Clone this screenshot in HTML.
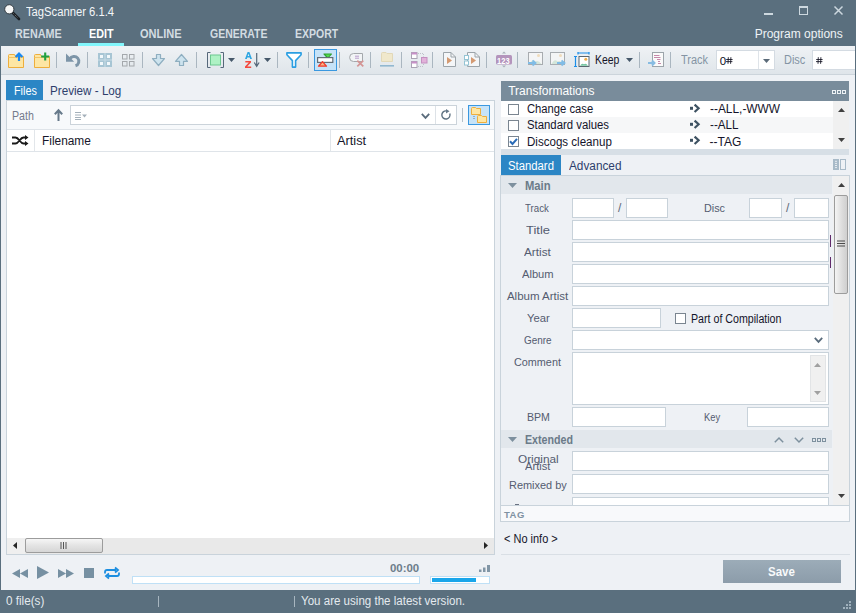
<!DOCTYPE html>
<html><head><meta charset="utf-8">
<style>
*{box-sizing:border-box;margin:0;padding:0}
html,body{width:856px;height:613px;overflow:hidden;background:#eef1f5;font-family:"Liberation Sans",sans-serif;font-size:12px;color:#1a1a2a}
.a{position:absolute}
.t{position:absolute;white-space:nowrap;line-height:1}
svg{overflow:visible}
</style></head><body>
<div class="a" style="left:0px;top:0px;width:856px;height:46px;background:#5a6f7e"></div>
<div class="a" style="left:0px;top:590px;width:856px;height:23px;background:#5a6f7e"></div>
<div class="a" style="left:0px;top:46px;width:1px;height:544px;background:#5a6f7e"></div>
<div class="a" style="left:855px;top:46px;width:1px;height:544px;background:#5a6f7e"></div>
<svg class="a" style="left:0px;top:0px" width="22" height="22" viewBox="0 0 22 22"><path d="M12.5 12.5L19 19" stroke="#1a1e22" stroke-width="2.6" stroke-linecap="round"/><path d="M13.5 13.5L18 18" stroke="#9aa0a4" stroke-width="0.8" stroke-dasharray="1 1.2"/><circle cx="9.3" cy="9.3" r="4.6" fill="#f8f8f8" stroke="#2a3238" stroke-width="0.9"/></svg>
<div class="t" style="left:26.00px;top:5.84px;font-size:12px;font-weight:normal;color:#f4f7f9;letter-spacing:0.000px;transform:scaleX(0.9362);transform-origin:0 0;">TagScanner 6.1.4</div>
<div class="a" style="left:764px;top:13px;width:9px;height:2px;background:#cdd8df"></div>
<div class="a" style="left:799px;top:6px;width:9px;height:9px;border:1px solid #cdd8df;border-top-width:2px"></div>
<svg class="a" style="left:834px;top:6px" width="9" height="9" viewBox="0 0 9 9"><path d="M0.5 0.5L8.5 8.5M8.5 0.5L0.5 8.5" stroke="#cdd8df" stroke-width="1.5"/></svg>
<div class="t" style="left:14.50px;top:28.42px;font-size:12.5px;font-weight:bold;color:#d3dce2;letter-spacing:0.000px;transform:scaleX(0.8636);transform-origin:0 0;">RENAME</div>
<div class="t" style="left:88.50px;top:28.42px;font-size:12.5px;font-weight:bold;color:#ffffff;letter-spacing:0.000px;transform:scaleX(0.8621);transform-origin:0 0;">EDIT</div>
<div class="t" style="left:140.30px;top:28.42px;font-size:12.5px;font-weight:bold;color:#d3dce2;letter-spacing:0.000px;transform:scaleX(0.8833);transform-origin:0 0;">ONLINE</div>
<div class="t" style="left:209.70px;top:28.42px;font-size:12.5px;font-weight:bold;color:#d3dce2;letter-spacing:0.000px;transform:scaleX(0.8377);transform-origin:0 0;">GENERATE</div>
<div class="t" style="left:294.50px;top:28.42px;font-size:12.5px;font-weight:bold;color:#d3dce2;letter-spacing:0.000px;transform:scaleX(0.8404);transform-origin:0 0;">EXPORT</div>
<div class="a" style="left:78px;top:43px;width:46px;height:3px;background:#82f6fc"></div>
<div class="t" style="left:754.70px;top:28.14px;font-size:12px;font-weight:normal;color:#eef3f6;letter-spacing:0.000px;">Program options</div>
<div class="a" style="left:1px;top:46px;width:854px;height:29px;background:linear-gradient(#eff2f5,#dfe5ea);border-bottom:1px solid #ccd4db"></div>
<div class="a" style="left:56px;top:52px;width:1px;height:16px;background:#aab6c0"></div>
<div class="a" style="left:87px;top:52px;width:1px;height:16px;background:#aab6c0"></div>
<div class="a" style="left:142px;top:52px;width:1px;height:16px;background:#aab6c0"></div>
<div class="a" style="left:196px;top:52px;width:1px;height:16px;background:#aab6c0"></div>
<div class="a" style="left:277px;top:52px;width:1px;height:16px;background:#aab6c0"></div>
<div class="a" style="left:308px;top:52px;width:1px;height:16px;background:#aab6c0"></div>
<div class="a" style="left:339px;top:52px;width:1px;height:16px;background:#aab6c0"></div>
<div class="a" style="left:370px;top:52px;width:1px;height:16px;background:#aab6c0"></div>
<div class="a" style="left:401px;top:52px;width:1px;height:16px;background:#aab6c0"></div>
<div class="a" style="left:432px;top:52px;width:1px;height:16px;background:#aab6c0"></div>
<div class="a" style="left:486px;top:52px;width:1px;height:16px;background:#aab6c0"></div>
<div class="a" style="left:517px;top:52px;width:1px;height:16px;background:#aab6c0"></div>
<div class="a" style="left:639px;top:52px;width:1px;height:16px;background:#aab6c0"></div>
<div class="a" style="left:670px;top:52px;width:1px;height:16px;background:#aab6c0"></div>
<svg class="a" style="left:8px;top:54px" width="17" height="14" viewBox="0 0 17 14"><path d="M0.5 3.5V1.5Q0.5 0.5 1.5 0.5H6.5L7.5 2.5H15.5V13.5H0.5Z" fill="#fde6a4" stroke="#eeae3c"/><path d="M0.5 3.5H15.5" stroke="#eeae3c" stroke-opacity="0.6"/></svg>
<svg class="a" style="left:14px;top:52px" width="10" height="9" viewBox="0 0 10 9"><path d="M1.6 5L5 1.6L8.4 5M5 2V9" stroke="#1888f0" stroke-width="2.2" fill="none"/></svg>
<svg class="a" style="left:34px;top:54px" width="17" height="14" viewBox="0 0 17 14"><path d="M0.5 3.5V1.5Q0.5 0.5 1.5 0.5H6.5L7.5 2.5H15.5V13.5H0.5Z" fill="#fde6a4" stroke="#eeae3c"/><path d="M0.5 3.5H15.5" stroke="#eeae3c" stroke-opacity="0.6"/></svg>
<svg class="a" style="left:40px;top:52px" width="10" height="9" viewBox="0 0 10 9"><path d="M5.2 0.5V8.5M1.2 4.5H9.2" stroke="#20a040" stroke-width="2.1"/></svg>
<svg class="a" style="left:62px;top:50px" width="22" height="20" viewBox="0 0 22 20"><path d="M7.8 9A4.8 4.8 0 1 1 13.5 15.8" stroke="#7d95a8" stroke-width="3" fill="none"/><path d="M4 3.5V11.7H12.2Z" fill="#7d95a8"/></svg>
<svg class="a" style="left:98px;top:53px" width="14" height="14" viewBox="0 0 14 14"><rect x="0" y="0" width="14" height="14" fill="#a7c5d4"/><path d="M7 0V14M0 7H14" stroke="#c8dce6" stroke-width="1"/><rect x="2" y="2" width="3" height="3" fill="#f2f8fb"/><rect x="9" y="2" width="3" height="3" fill="#f2f8fb"/><rect x="2" y="9" width="3" height="3" fill="#f2f8fb"/><rect x="9" y="9" width="3" height="3" fill="#f2f8fb"/></svg>
<svg class="a" style="left:122px;top:54px" width="13" height="13" viewBox="0 0 13 13"><rect x="0.5" y="0.5" width="4.5" height="4.5" fill="none" stroke="#a4a8ac"/><rect x="7.5" y="0.5" width="4.5" height="4.5" fill="none" stroke="#a4a8ac"/><rect x="0.5" y="7.5" width="4.5" height="4.5" fill="none" stroke="#a4a8ac"/><rect x="7.5" y="7.5" width="4.5" height="4.5" fill="none" stroke="#a4a8ac"/></svg>
<svg class="a" style="left:152px;top:54px" width="13" height="12" viewBox="0 0 13 12"><path d="M4.5 0.5H8.5V4.5H12.5L6.5 11.5L0.5 4.5H4.5Z" fill="#cde3ee" stroke="#8eaec0" stroke-width="1.2" stroke-linejoin="round"/></svg>
<svg class="a" style="left:175px;top:54px" width="13" height="12" viewBox="0 0 13 12"><path d="M4.5 11.5H8.5V7.3H12.5L6.5 0.5L0.5 7.3H4.5Z" fill="#cde3ee" stroke="#8eaec0" stroke-width="1.2" stroke-linejoin="round"/></svg>
<svg class="a" style="left:207px;top:52px" width="17" height="16" viewBox="0 0 17 16"><path d="M3.5 0.5H0.5V15.5H3.5M13.5 0.5H16.5V15.5H13.5" stroke="#56687a" fill="none"/><rect x="3.5" y="3" width="10" height="10" fill="#aef2c4" stroke="#6cc890"/></svg>
<svg class="a" style="left:228px;top:58px" width="7" height="4" viewBox="0 0 7 4"><path d="M0 0H7L3.5 4Z" fill="#46586a"/></svg>
<svg class="a" style="left:244.5px;top:52px" width="7" height="7" viewBox="0 0 7 7"><path fill-rule="evenodd" d="M0 7L2.6 0H4.4L7 7H5.2L4.7 5.5H2.3L1.8 7ZM2.7 4.1H4.3L3.5 1.7Z" fill="#2ea6e2"/></svg>
<svg class="a" style="left:245px;top:61px" width="6" height="7" viewBox="0 0 6 7"><path d="M0.3 0H6V1.4L2.2 5.6H6.2V7H0V5.6L3.8 1.4H0.3Z" fill="#f44a3e"/></svg>
<svg class="a" style="left:254px;top:53px" width="6" height="14" viewBox="0 0 6 14"><path d="M2.7 0V13.5M0.3 9.5L2.7 13.3L5.1 9.5" stroke="#56687a" stroke-width="1.2" fill="none"/></svg>
<svg class="a" style="left:264px;top:58px" width="7" height="4" viewBox="0 0 7 4"><path d="M0 0H7L3.5 4Z" fill="#46586a"/></svg>
<svg class="a" style="left:286px;top:52px" width="16" height="16" viewBox="0 0 16 16"><path d="M0.9 0.9H15.1V2.8L9.6 8.6V15.1H6.4V8.6L0.9 2.8Z" fill="#fff" stroke="#2a9ee2" stroke-width="1.6" stroke-linejoin="round"/></svg>
<div class="a" style="left:314px;top:49px;width:23px;height:22px;background:#c6e3f8;border:1px solid #3a98e0"></div>
<svg class="a" style="left:317px;top:53px" width="17" height="14" viewBox="0 0 17 14"><path d="M7 1H14.5L10.8 5Z" fill="#52dc4e" stroke="#2ea030" stroke-width="1.1" stroke-linejoin="round"/><rect x="0.6" y="4.6" width="15.2" height="4.8" fill="#fff" stroke="#646e78" stroke-width="1.2"/><path d="M1.5 13.2H9.5L5.5 8.6Z" fill="#f8b484" stroke="#f03c2c" stroke-width="1.3" stroke-linejoin="round"/></svg>
<svg class="a" style="left:349px;top:53px" width="16" height="14" viewBox="0 0 16 14"><path d="M4.5 0.5H13.5V8.5H4.5Q0.6 8.5 0.6 4.5Q0.6 0.5 4.5 0.5Z" fill="#f2f4f6" stroke="#a4a8ac"/><path d="M6 3.2H10M6 5.2H10" stroke="#b89ccc"/><path d="M8.3 7.6L14.3 13.3M14.3 7.6L8.3 13.3" stroke="#d49494" stroke-width="1.7"/></svg>
<svg class="a" style="left:380px;top:52px" width="14" height="15" viewBox="0 0 14 15"><path d="M1.5 1.5Q1.5 0.5 2.5 0.5H6L7 1.5H12.5V9.5H1.5Z" fill="#f0e8cc" stroke="#e2d8b8"/><rect x="0" y="13" width="14" height="1.6" fill="#92b8d0"/></svg>
<svg class="a" style="left:411px;top:52px" width="17" height="16" viewBox="0 0 17 16"><rect x="0.5" y="0.5" width="5.5" height="6" fill="#fff" stroke="#aaa4b4"/><rect x="0.5" y="0.5" width="5.5" height="2" fill="#c890c8"/><rect x="0.5" y="9.5" width="5.5" height="6" fill="#fff" stroke="#aaa4b4"/><rect x="0.5" y="9.5" width="5.5" height="2" fill="#c890c8"/><rect x="10.5" y="5.5" width="5.5" height="5.5" fill="#e2b2da" stroke="#c490c0"/><path d="M7 1.5H13M7 14.5H13M12.5 2V4.5M12.5 12V14" stroke="#b8bcc4" stroke-width="0.9" stroke-dasharray="1 1"/></svg>
<svg class="a" style="left:443px;top:52px" width="13" height="15" viewBox="0 0 13 15"><path d="M0.5 0.5H8L12.5 5V14.5H0.5Z" fill="#f4f6f8" stroke="#9ca4aa"/><path d="M8 0.5V5H12.5" fill="none" stroke="#9ca4aa"/><path d="M4 5L9 8.5L4 12Z" fill="#d49a72"/></svg>
<svg class="a" style="left:467px;top:52px" width="13" height="15" viewBox="0 0 13 15"><path d="M0.5 0.5H8L12.5 5V14.5H0.5Z" fill="#f4f6f8" stroke="#9ca4aa"/><path d="M8 0.5V5H12.5" fill="none" stroke="#9ca4aa"/><path d="M4 5L9 8.5L4 12Z" fill="#d49a72"/></svg>
<svg class="a" style="left:464px;top:55px" width="6" height="11" viewBox="0 0 6 11"><rect x="0.5" y="0.5" width="4" height="4" fill="#fff" stroke="#94c4d4"/><rect x="0.5" y="6" width="4" height="4" fill="#fff" stroke="#94c4d4"/></svg>
<svg class="a" style="left:496px;top:51px" width="16" height="17" viewBox="0 0 16 17"><path d="M6 2.5L8 0.5L10 2.5Z" fill="#a8b0b8"/><path d="M6 14.5L8 16.5L10 14.5Z" fill="#a8b0b8"/><rect x="0" y="4" width="16" height="9.5" rx="1.5" fill="#b494bc"/></svg>
<div class="t" style="left:497.30px;top:55.96px;font-size:9.5px;font-weight:bold;color:#ffffff;letter-spacing:0.000px;transform:scaleX(0.7941);transform-origin:0 0;">123</div>
<svg class="a" style="left:528px;top:52px" width="15" height="13" viewBox="0 0 15 13"><rect x="0.5" y="0.5" width="14" height="12" fill="#f4f5f6" stroke="#a8acb0"/><circle cx="10.5" cy="3.5" r="1.5" fill="#f0dcbc"/><path d="M1.5 12Q4.5 6 7.5 9.5Q10 7.5 13.5 12Z" fill="#d4e6da"/></svg>
<svg class="a" style="left:528px;top:60px" width="9" height="6" viewBox="0 0 9 6"><path d="M0 3H7M4.5 0.5L7.5 3L4.5 5.5" stroke="#80bce6" stroke-width="1.8" fill="none"/></svg>
<svg class="a" style="left:550px;top:52px" width="15" height="13" viewBox="0 0 15 13"><rect x="0.5" y="0.5" width="14" height="12" fill="#f4f5f6" stroke="#a8acb0"/><circle cx="10.5" cy="3.5" r="1.5" fill="#f0dcbc"/><path d="M1.5 12Q4.5 6 7.5 9.5Q10 7.5 13.5 12Z" fill="#d4e6da"/></svg>
<svg class="a" style="left:557px;top:60px" width="9" height="6" viewBox="0 0 9 6"><path d="M0 3H7M4.5 0.5L7.5 3L4.5 5.5" stroke="#80bce6" stroke-width="1.8" fill="none"/></svg>
<svg class="a" style="left:574px;top:52px" width="16" height="16" viewBox="0 0 16 16"><path d="M4 1H15M4 0V2.5M15 0V2.5" stroke="#1c8ee8" stroke-width="1.2"/><path d="M1.5 4.5V14.5M0 4.5H3M0 14.5H3" stroke="#1c8ee8" stroke-width="1.2"/><rect x="5" y="4.5" width="10" height="10" fill="#fff" stroke="#5a6670"/><circle cx="11.8" cy="7.3" r="1.5" fill="#f0b050"/><path d="M6 13.8Q8 10.5 10 12.3Q12 10.8 14 13.8Z" fill="#74c4a0"/></svg>
<div class="t" style="left:594.70px;top:54.44px;font-size:12px;font-weight:normal;color:#141428;letter-spacing:0.000px;transform:scaleX(0.8679);transform-origin:0 0;">Keep</div>
<svg class="a" style="left:626px;top:58px" width="7" height="4" viewBox="0 0 7 4"><path d="M0 0H7L3.5 4Z" fill="#46586a"/></svg>
<svg class="a" style="left:648px;top:52px" width="16" height="15" viewBox="0 0 16 15"><rect x="4.5" y="0.5" width="11" height="14" fill="#fafafa" stroke="#9ca4aa"/><path d="M6 3.5H11.5M6 5.5H12.5M9 7.5H12.5M10 9.5H12M10 11.5H13" stroke="#c07aa0" stroke-width="0.9"/><path d="M0 11H6M4 8.5L6.5 11L4 13.5" stroke="#88bce2" stroke-width="2" fill="none"/></svg>
<div class="t" style="left:680.50px;top:54.04px;font-size:12px;font-weight:normal;color:#8494a4;letter-spacing:0.000px;transform:scaleX(0.9129);transform-origin:0 0;">Track</div>
<div class="a" style="left:716px;top:50px;width:59px;height:20px;background:#fff;border:1px solid #d4dbe2"></div>
<div class="a" style="left:758px;top:51px;width:1px;height:18px;background:#dfe4e9"></div>
<div class="t" style="left:719.70px;top:56.27px;font-size:11.5px;font-weight:normal;color:#101020;letter-spacing:0.000px;">0</div>
<svg class="a" style="left:726px;top:57px" width="7" height="7" viewBox="0 0 7 7"><path d="M2.3 0.2L2 6.8M4.9 0.2L4.6 6.8M0.2 2.5H6.6M0 4.6H6.4" stroke="#101020" stroke-width="0.85"/></svg>
<svg class="a" style="left:763px;top:59px" width="7" height="4" viewBox="0 0 7 4"><path d="M0 0H7L3.5 4Z" fill="#5a6a78"/></svg>
<div class="t" style="left:783.70px;top:54.04px;font-size:12px;font-weight:normal;color:#8494a4;letter-spacing:0.000px;transform:scaleX(0.9130);transform-origin:0 0;">Disc</div>
<div class="a" style="left:812px;top:50px;width:43px;height:20px;background:#fff;border:1px solid #d4dbe2;border-right:none"></div>
<svg class="a" style="left:816px;top:57px" width="7" height="7" viewBox="0 0 7 7"><path d="M2.3 0.2L2 6.8M4.9 0.2L4.6 6.8M0.2 2.5H6.6M0 4.6H6.4" stroke="#101020" stroke-width="0.85"/></svg>
<div class="a" style="left:6px;top:80px;width:37px;height:20px;background:#2b86c5"></div>
<div class="t" style="left:13.50px;top:84.64px;font-size:12px;font-weight:normal;color:#ffffff;letter-spacing:0.000px;transform:scaleX(0.9000);transform-origin:0 0;">Files</div>
<div class="t" style="left:50.20px;top:84.84px;font-size:12px;font-weight:normal;color:#2d3e6c;letter-spacing:0.000px;transform:scaleX(0.9726);transform-origin:0 0;">Preview - Log</div>
<div class="a" style="left:6px;top:100px;width:489px;height:455px;background:#f7f9fb;border:1px solid #c9d3db"></div>
<div class="t" style="left:12.30px;top:109.84px;font-size:12px;font-weight:normal;color:#747a8c;letter-spacing:0.000px;transform:scaleX(0.8880);transform-origin:0 0;">Path</div>
<svg class="a" style="left:54px;top:109px" width="9" height="12" viewBox="0 0 9 12"><path d="M4.5 1.5V12M0.8 5.2L4.5 1.2L8.2 5.2" stroke="#66798a" stroke-width="2" fill="none"/></svg>
<div class="a" style="left:70px;top:105px;width:387px;height:20px;background:#fff;border:1px solid #cbd3da"></div>
<div class="a" style="left:435px;top:106px;width:1px;height:18px;background:#dde2e7"></div>
<svg class="a" style="left:75px;top:112px" width="13" height="8" viewBox="0 0 13 8"><path d="M0 0.5H6M0 3H6M0 5.5H6M0 7.5H6" stroke="#a4b0ba"/><path d="M7 2.5H12L9.5 5.5Z" fill="#a4b0ba"/></svg>
<svg class="a" style="left:421px;top:113px" width="9" height="6" viewBox="0 0 9 6"><path d="M0.8 0.8L4.5 4.8L8.2 0.8" stroke="#5a6c7c" stroke-width="1.8" fill="none"/></svg>
<svg class="a" style="left:441px;top:109px" width="11" height="12" viewBox="0 0 11 12"><path d="M8.8 4.6A4.1 4.1 0 1 1 5.5 1.9" stroke="#5e7282" stroke-width="1.4" fill="none"/><path d="M5 0L8.5 2.2L5 4.5Z" fill="#66798a"/></svg>
<div class="a" style="left:462px;top:108px;width:1px;height:14px;background:#b4c0c8"></div>
<div class="a" style="left:468px;top:105px;width:22px;height:20px;background:#c6e3f8;border:1px solid #3a98e0"></div>
<svg class="a" style="left:471px;top:106px" width="17" height="17" viewBox="0 0 17 17"><path d="M0.5 2.5Q0.5 1.5 1.5 1.5H4.5L5.5 2.5H9.5V8.5H0.5Z" fill="#fde6a4" stroke="#eeae3c"/><path d="M3 10V14" stroke="#6a7c8c" stroke-dasharray="1 1"/><path d="M6.5 10.5Q6.5 9.5 7.5 9.5H10.5L11.5 10.5H15.5V16.5H6.5Z" fill="#fde6a4" stroke="#eeae3c"/></svg>
<div class="a" style="left:7px;top:129px;width:487px;height:409px;background:#fff"></div>
<div class="a" style="left:7px;top:129px;width:487px;height:1px;background:#dfe4e9"></div>
<div class="a" style="left:7px;top:151px;width:487px;height:1px;background:#dfe4e9"></div>
<div class="a" style="left:34px;top:130px;width:1px;height:21px;background:#e2e6ea"></div>
<div class="a" style="left:330px;top:130px;width:1px;height:21px;background:#e2e6ea"></div>
<svg class="a" style="left:12px;top:135px" width="17" height="11" viewBox="0 0 17 11"><path d="M0 2.5H3.5C7 2.5 8 8.5 11.5 8.5H14M0 8.5H3.5C7 8.5 8 2.5 11.5 2.5H14" stroke="#1a1a1a" stroke-width="1.9" fill="none"/><path d="M13 0L16.5 2.5L13 5ZM13 6L16.5 8.5L13 11Z" fill="#1a1a1a"/></svg>
<div class="t" style="left:41.50px;top:135.44px;font-size:12px;font-weight:normal;color:#16162a;letter-spacing:0.000px;transform:scaleX(0.9900);transform-origin:0 0;">Filename</div>
<div class="t" style="left:337.00px;top:135.34px;font-size:12px;font-weight:normal;color:#16162a;letter-spacing:0.000px;transform:scaleX(1.0643);transform-origin:0 0;">Artist</div>
<div class="a" style="left:7px;top:538px;width:487px;height:16px;background:#e9e9e9"></div>
<div class="a" style="left:7px;top:538px;width:18px;height:16px;background:#efefef"></div>
<svg class="a" style="left:13px;top:542px" width="4" height="7" viewBox="0 0 4 7"><path d="M4 0V7L0 3.5Z" fill="#262626"/></svg>
<div class="a" style="left:25px;top:538px;width:78px;height:15px;background:linear-gradient(#f6f6f6,#e4e4e4 50%,#d6d6d6);border:1px solid #9c9c9c;border-radius:2px"></div>
<svg class="a" style="left:60px;top:542px" width="8" height="7" viewBox="0 0 8 7"><path d="M1 0V7M3.5 0V7M6 0V7" stroke="#555" stroke-width="1"/></svg>
<svg class="a" style="left:484px;top:542px" width="4" height="7" viewBox="0 0 4 7"><path d="M0 0V7L4 3.5Z" fill="#262626"/></svg>
<svg class="a" style="left:12px;top:569px" width="16" height="9" viewBox="0 0 16 9"><path d="M8 0V9L0 4.5ZM16 0V9L8 4.5Z" fill="#7690a2"/></svg>
<svg class="a" style="left:37px;top:566px" width="12" height="13" viewBox="0 0 12 13"><path d="M0 0L12 6.5L0 13Z" fill="#7690a2"/></svg>
<svg class="a" style="left:58px;top:569px" width="16" height="9" viewBox="0 0 16 9"><path d="M0 0V9L8 4.5ZM8 0V9L16 4.5Z" fill="#7690a2"/></svg>
<div class="a" style="left:84px;top:568px;width:10px;height:10px;background:#7690a2"></div>
<svg class="a" style="left:104px;top:567px" width="16" height="12" viewBox="0 0 16 12"><path d="M1 6.5V5Q1 3 3 3H12M11 0.5L14 3L11 5.5M15 5.5V7Q15 9 13 9H4M5 6.5L2 9L5 11.5" stroke="#1c8ee0" stroke-width="1.8" fill="none"/></svg>
<div class="t" style="left:389.70px;top:564.33px;font-size:10px;font-weight:bold;color:#6d7d8b;letter-spacing:0.000px;transform:scaleX(1.1423);transform-origin:0 0;">00:00</div>
<svg class="a" style="left:479px;top:565px" width="11" height="7" viewBox="0 0 11 7"><rect x="0" y="4.5" width="2.5" height="2.5" fill="#8196a6"/><rect x="4" y="2.5" width="2.5" height="4.5" fill="#8196a6"/><rect x="8" y="0" width="3" height="7" fill="#8196a6"/></svg>
<div class="a" style="left:132px;top:576px;width:288px;height:8px;background:#fff;border:1px solid #bfe0f6"></div>
<div class="a" style="left:430px;top:576px;width:60px;height:8px;background:#fff;border:1px solid #bfe0f6"></div>
<div class="a" style="left:432px;top:578px;width:44px;height:4px;background:#1aa6ea"></div>
<div class="t" style="left:6.40px;top:595.34px;font-size:12px;font-weight:normal;color:#e4eaef;letter-spacing:0.000px;transform:scaleX(0.9744);transform-origin:0 0;">0 file(s)</div>
<div class="a" style="left:158px;top:596px;width:1px;height:11px;background:#a8b6c0"></div>
<div class="a" style="left:294px;top:596px;width:1px;height:11px;background:#a8b6c0"></div>
<div class="t" style="left:301.00px;top:595.34px;font-size:12px;font-weight:normal;color:#e4eaef;letter-spacing:0.000px;transform:scaleX(0.9629);transform-origin:0 0;">You are using the latest version.</div>
<svg class="a" style="left:843px;top:601px" width="9" height="9" viewBox="0 0 9 9"><g fill="#9fb0bc"><rect x="6" y="0" width="2" height="2"/><rect x="3" y="3" width="2" height="2"/><rect x="6" y="3" width="2" height="2"/><rect x="0" y="6" width="2" height="2"/><rect x="3" y="6" width="2" height="2"/><rect x="6" y="6" width="2" height="2"/></g></svg>
<div class="a" style="left:501px;top:81px;width:348px;height:20px;background:#798c9b"></div>
<div class="t" style="left:508.20px;top:85.14px;font-size:12px;font-weight:normal;color:#ffffff;letter-spacing:0.000px;">Transformations</div>
<svg class="a" style="left:832px;top:90px" width="14" height="4" viewBox="0 0 14 4"><rect x="0.5" y="0.5" width="3" height="3" fill="none" stroke="#eef2f5"/><rect x="5.5" y="0.5" width="3" height="3" fill="none" stroke="#eef2f5"/><rect x="10.5" y="0.5" width="3" height="3" fill="none" stroke="#eef2f5"/></svg>
<div class="a" style="left:501px;top:101px;width:332px;height:48px;background:#fff"></div>
<div class="a" style="left:501px;top:117px;width:332px;height:16px;background:#f6f7f8"></div>
<div class="a" style="left:833px;top:101px;width:16px;height:48px;background:#f0f0f0"></div>
<svg class="a" style="left:838px;top:108px" width="7" height="4" viewBox="0 0 7 4"><path d="M0 4L3.5 0L7 4Z" fill="#404040"/></svg>
<svg class="a" style="left:838px;top:138px" width="7" height="4" viewBox="0 0 7 4"><path d="M0 0L3.5 4L7 0Z" fill="#404040"/></svg>
<div class="a" style="left:501px;top:149px;width:348px;height:6px;background:#d7dfe6"></div>
<div class="a" style="left:508px;top:104px;width:11px;height:11px;background:#fff;border:1px solid #7a8590"></div>
<div class="t" style="left:526.60px;top:103.34px;font-size:12px;font-weight:normal;color:#14142a;letter-spacing:0.000px;transform:scaleX(0.9366);transform-origin:0 0;">Change case</div>
<svg class="a" style="left:690px;top:104px" width="10" height="9" viewBox="0 0 10 9"><rect x="0" y="2.8" width="3" height="3" fill="#3e5262"/><path d="M4.6 0.6L8.6 4.3L4.6 8" stroke="#3e5262" stroke-width="2.2" fill="none"/></svg>
<div class="t" style="left:709.60px;top:103.34px;font-size:12px;font-weight:normal;color:#14142a;letter-spacing:0.000px;transform:scaleX(0.9915);transform-origin:0 0;">--ALL,-WWW</div>
<div class="a" style="left:508px;top:120px;width:11px;height:11px;background:#fff;border:1px solid #7a8590"></div>
<div class="t" style="left:526.60px;top:119.44px;font-size:12px;font-weight:normal;color:#14142a;letter-spacing:0.000px;transform:scaleX(0.9460);transform-origin:0 0;">Standard values</div>
<svg class="a" style="left:690px;top:120px" width="10" height="9" viewBox="0 0 10 9"><rect x="0" y="2.8" width="3" height="3" fill="#3e5262"/><path d="M4.6 0.6L8.6 4.3L4.6 8" stroke="#3e5262" stroke-width="2.2" fill="none"/></svg>
<div class="t" style="left:709.60px;top:119.44px;font-size:12px;font-weight:normal;color:#14142a;letter-spacing:0.000px;transform:scaleX(0.9700);transform-origin:0 0;">--ALL</div>
<div class="a" style="left:508px;top:136px;width:11px;height:11px;background:#fff;border:1px solid #7a8590"></div>
<svg class="a" style="left:509px;top:138px" width="9" height="7" viewBox="0 0 9 7"><path d="M1 3.3L3.5 6L8 0.8" stroke="#2a6cb8" stroke-width="2" fill="none"/></svg>
<div class="t" style="left:526.60px;top:135.64px;font-size:12px;font-weight:normal;color:#14142a;letter-spacing:0.000px;transform:scaleX(0.9636);transform-origin:0 0;">Discogs cleanup</div>
<svg class="a" style="left:690px;top:136px" width="10" height="9" viewBox="0 0 10 9"><rect x="0" y="2.8" width="3" height="3" fill="#3e5262"/><path d="M4.6 0.6L8.6 4.3L4.6 8" stroke="#3e5262" stroke-width="2.2" fill="none"/></svg>
<div class="t" style="left:709.60px;top:135.64px;font-size:12px;font-weight:normal;color:#14142a;letter-spacing:0.000px;">--TAG</div>
<div class="a" style="left:501px;top:155px;width:60px;height:20px;background:#2b86c5"></div>
<div class="t" style="left:507.50px;top:159.84px;font-size:12px;font-weight:normal;color:#ffffff;letter-spacing:0.000px;transform:scaleX(0.9429);transform-origin:0 0;">Standard</div>
<div class="t" style="left:568.70px;top:159.84px;font-size:12px;font-weight:normal;color:#2d3e6c;letter-spacing:0.000px;transform:scaleX(0.9830);transform-origin:0 0;">Advanced</div>
<svg class="a" style="left:833px;top:159px" width="14" height="11" viewBox="0 0 14 11"><rect x="0.5" y="0.5" width="5" height="10" fill="#a8bac8" stroke="#a8bac8"/><rect x="7.5" y="0.5" width="5" height="10" fill="none" stroke="#a8bac8"/><path d="M2 2.3H4M2 4.4H4M2 6.5H4M2 8.6H4" stroke="#eef2f5" stroke-width="0.9"/></svg>
<div class="a" style="left:500px;top:175px;width:350px;height:331px;background:#eef1f5;border:1px solid #c9d3db;border-bottom:none"></div>
<div class="a" style="left:501px;top:176px;width:331px;height:18px;background:#e2e7ec"></div>
<svg class="a" style="left:508px;top:183px" width="9" height="5" viewBox="0 0 9 5"><path d="M0 0H9L4.5 5Z" fill="#7d909e"/></svg>
<div class="t" style="left:525.00px;top:180.04px;font-size:12px;font-weight:bold;color:#6b7b89;letter-spacing:0.000px;transform:scaleX(0.9370);transform-origin:0 0;">Main</div>
<div class="a" style="left:572px;top:198px;width:42px;height:20px;background:#fff;border:1px solid #c8d2da"></div>
<div class="t" style="left:618.00px;top:202.44px;font-size:12px;font-weight:normal;color:#606878;letter-spacing:0.000px;">/</div>
<div class="a" style="left:626px;top:198px;width:42px;height:20px;background:#fff;border:1px solid #c8d2da"></div>
<div class="t" style="left:525.40px;top:202.87px;font-size:11.5px;font-weight:normal;color:#545c70;letter-spacing:0.000px;transform:scaleX(0.8400);transform-origin:0 0;">Track</div>
<div class="t" style="left:704.00px;top:202.87px;font-size:11.5px;font-weight:normal;color:#545c70;letter-spacing:0.000px;transform:scaleX(0.9391);transform-origin:0 0;">Disc</div>
<div class="a" style="left:749px;top:198px;width:33px;height:20px;background:#fff;border:1px solid #c8d2da"></div>
<div class="t" style="left:786.00px;top:202.44px;font-size:12px;font-weight:normal;color:#606878;letter-spacing:0.000px;">/</div>
<div class="a" style="left:794px;top:198px;width:35px;height:20px;background:#fff;border:1px solid #c8d2da"></div>
<div class="a" style="left:572px;top:220px;width:257px;height:20px;background:#fff;border:1px solid #c8d2da"></div>
<div class="t" style="left:525.60px;top:224.87px;font-size:11.5px;font-weight:normal;color:#545c70;letter-spacing:0.000px;transform:scaleX(1.1273);transform-origin:0 0;">Title</div>
<div class="a" style="left:572px;top:242px;width:257px;height:20px;background:#fff;border:1px solid #c8d2da"></div>
<div class="t" style="left:524.20px;top:246.87px;font-size:11.5px;font-weight:normal;color:#545c70;letter-spacing:0.000px;transform:scaleX(1.0222);transform-origin:0 0;">Artist</div>
<div class="a" style="left:572px;top:264px;width:257px;height:20px;background:#fff;border:1px solid #c8d2da"></div>
<div class="t" style="left:522.00px;top:268.87px;font-size:11.5px;font-weight:normal;color:#545c70;letter-spacing:0.000px;transform:scaleX(0.9697);transform-origin:0 0;">Album</div>
<div class="a" style="left:572px;top:286px;width:257px;height:20px;background:#fff;border:1px solid #c8d2da"></div>
<div class="t" style="left:506.95px;top:290.87px;font-size:11.5px;font-weight:normal;color:#545c70;letter-spacing:0.000px;">Album Artist</div>
<div class="a" style="left:572px;top:308px;width:89px;height:20px;background:#fff;border:1px solid #c8d2da"></div>
<div class="t" style="left:526.75px;top:312.87px;font-size:11.5px;font-weight:normal;color:#545c70;letter-spacing:0.000px;transform:scaleX(0.9783);transform-origin:0 0;">Year</div>
<div class="a" style="left:675px;top:313px;width:11px;height:11px;background:#fff;border:1px solid #7a8590"></div>
<div class="t" style="left:690.60px;top:313.04px;font-size:12px;font-weight:normal;color:#14142a;letter-spacing:0.000px;transform:scaleX(0.8863);transform-origin:0 0;">Part of Compilation</div>
<div class="a" style="left:572px;top:330px;width:257px;height:20px;background:#fff;border:1px solid #c8d2da"></div>
<div class="t" style="left:523.75px;top:334.87px;font-size:11.5px;font-weight:normal;color:#545c70;letter-spacing:0.000px;transform:scaleX(0.8636);transform-origin:0 0;">Genre</div>
<svg class="a" style="left:814px;top:337px" width="9" height="6" viewBox="0 0 9 6"><path d="M0.8 0.8L4.5 4.8L8.2 0.8" stroke="#5a6c7c" stroke-width="1.8" fill="none"/></svg>
<div class="a" style="left:572px;top:352px;width:257px;height:53px;background:#fff;border:1px solid #c8d2da"></div>
<div class="t" style="left:514.00px;top:357.27px;font-size:11.5px;font-weight:normal;color:#545c70;letter-spacing:0.000px;transform:scaleX(0.9412);transform-origin:0 0;">Comment</div>
<div class="a" style="left:810px;top:355px;width:16px;height:47px;background:#f0f0f0;border:1px solid #e2e4e6"></div>
<svg class="a" style="left:814px;top:363px" width="7" height="4" viewBox="0 0 7 4"><path d="M0 4L3.5 0L7 4Z" fill="#a0a0a0"/></svg>
<svg class="a" style="left:814px;top:391px" width="7" height="4" viewBox="0 0 7 4"><path d="M0 0L3.5 4L7 0Z" fill="#a0a0a0"/></svg>
<div class="a" style="left:572px;top:407px;width:94px;height:20px;background:#fff;border:1px solid #c8d2da"></div>
<div class="t" style="left:526.50px;top:412.17px;font-size:11.5px;font-weight:normal;color:#545c70;letter-spacing:0.000px;transform:scaleX(0.9200);transform-origin:0 0;">BPM</div>
<div class="t" style="left:704.40px;top:412.17px;font-size:11.5px;font-weight:normal;color:#545c70;letter-spacing:0.000px;transform:scaleX(0.8150);transform-origin:0 0;">Key</div>
<div class="a" style="left:747px;top:407px;width:82px;height:20px;background:#fff;border:1px solid #c8d2da"></div>
<div class="a" style="left:501px;top:430px;width:331px;height:18px;background:#e2e7ec"></div>
<svg class="a" style="left:508px;top:437px" width="9" height="5" viewBox="0 0 9 5"><path d="M0 0H9L4.5 5Z" fill="#7d909e"/></svg>
<div class="t" style="left:524.50px;top:434.14px;font-size:12px;font-weight:bold;color:#6b7b89;letter-spacing:0.000px;transform:scaleX(0.8889);transform-origin:0 0;">Extended</div>
<svg class="a" style="left:774px;top:437px" width="10" height="6" viewBox="0 0 10 6"><path d="M0.8 5.2L5 1L9.2 5.2" stroke="#7d909e" stroke-width="1.5" fill="none"/></svg>
<svg class="a" style="left:794px;top:437px" width="10" height="6" viewBox="0 0 10 6"><path d="M0.8 0.8L5 5L9.2 0.8" stroke="#7d909e" stroke-width="1.5" fill="none"/></svg>
<svg class="a" style="left:812px;top:438px" width="14" height="4" viewBox="0 0 14 4"><rect x="0.5" y="0.5" width="3" height="3" fill="none" stroke="#7d909e"/><rect x="5.5" y="0.5" width="3" height="3" fill="none" stroke="#7d909e"/><rect x="10.5" y="0.5" width="3" height="3" fill="none" stroke="#7d909e"/></svg>
<div class="a" style="left:572px;top:451px;width:257px;height:20px;background:#fff;border:1px solid #c8d2da"></div>
<div class="t" style="left:517.70px;top:453.57px;font-size:11.5px;font-weight:normal;color:#545c70;letter-spacing:0.000px;transform:scaleX(1.0250);transform-origin:0 0;">Original</div>
<div class="t" style="left:524.60px;top:461.07px;font-size:11.5px;font-weight:normal;color:#545c70;letter-spacing:0.000px;transform:scaleX(0.9704);transform-origin:0 0;">Artist</div>
<div class="a" style="left:572px;top:474px;width:257px;height:20px;background:#fff;border:1px solid #c8d2da"></div>
<div class="t" style="left:509.00px;top:480.27px;font-size:11.5px;font-weight:normal;color:#545c70;letter-spacing:0.000px;transform:scaleX(0.9508);transform-origin:0 0;">Remixed by</div>
<div class="a" style="left:572px;top:497px;width:257px;height:9px;background:#fff;border:1px solid #c8d2da;border-bottom:none"></div>
<div class="a" style="left:515px;top:504px;width:4px;height:1px;background:#6a7282"></div>
<div class="a" style="left:833px;top:176px;width:16px;height:330px;background:#f0f0f0"></div>
<svg class="a" style="left:838px;top:183px" width="7" height="4" viewBox="0 0 7 4"><path d="M0 4L3.5 0L7 4Z" fill="#404040"/></svg>
<svg class="a" style="left:838px;top:494px" width="7" height="4" viewBox="0 0 7 4"><path d="M0 0L3.5 4L7 0Z" fill="#404040"/></svg>
<div class="a" style="left:834px;top:195px;width:14px;height:99px;background:linear-gradient(90deg,#f4f4f4,#dcdcdc 60%,#cfcfcf);border:1px solid #9c9c9c;border-radius:2px"></div>
<svg class="a" style="left:837px;top:240px" width="8" height="8" viewBox="0 0 8 8"><path d="M0 1H8M0 3.5H8M0 6H8" stroke="#4a4a4a" stroke-width="1"/></svg>
<div class="a" style="left:830px;top:235px;width:1px;height:12px;background:#602a6a"></div>
<div class="a" style="left:830px;top:257px;width:1px;height:11px;background:#602a6a"></div>
<div class="a" style="left:500px;top:505px;width:350px;height:17px;background:#f8f9fb;border:1px solid #c9d3db"></div>
<div class="t" style="left:504.00px;top:509.96px;font-size:9.5px;font-weight:bold;color:#7f92a2;letter-spacing:0.500px;">TAG</div>
<div class="t" style="left:504.00px;top:533.04px;font-size:12px;font-weight:normal;color:#14142a;letter-spacing:0.000px;transform:scaleX(0.9153);transform-origin:0 0;">&lt; No info &gt;</div>
<div class="a" style="left:501px;top:554px;width:349px;height:1px;background:#d9dfe5"></div>
<div class="a" style="left:723px;top:560px;width:118px;height:23px;background:linear-gradient(#9cacb8,#8c9caa)"></div>
<div class="t" style="left:767.70px;top:565.27px;font-size:13.5px;font-weight:bold;color:#f8fafb;letter-spacing:0.000px;transform:scaleX(0.8531);transform-origin:0 0;">Save</div>
</body></html>
